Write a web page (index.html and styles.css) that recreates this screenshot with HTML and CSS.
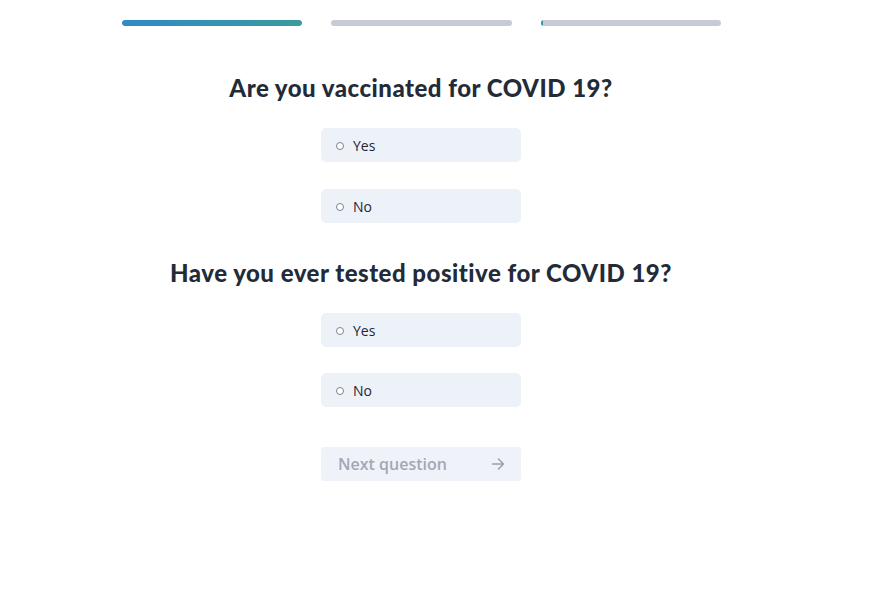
FILE: index.html
```html
<!DOCTYPE html>
<html lang="en">
<head>
<meta charset="utf-8">
<title>COVID 19 questionnaire</title>
<link rel="stylesheet" href="styles.css">
</head>
<body>
<main class="page">
  <div class="progress">
    <div class="track"><div class="fill" style="width:100%"></div></div>
    <div class="track"><div class="fill" style="width:0%"></div></div>
    <div class="track"><div class="fill" style="width:2px"></div></div>
  </div>

  <section class="question">
    <h2 class="title">Are you vaccinated for COVID 19?</h2>
    <div class="options">
      <label class="option"><span class="radio"></span><span class="label">Yes</span></label>
      <label class="option"><span class="radio"></span><span class="label">No</span></label>
    </div>
  </section>

  <section class="question">
    <h2 class="title">Have you ever tested positive for COVID 19?</h2>
    <div class="options">
      <label class="option"><span class="radio"></span><span class="label">Yes</span></label>
      <label class="option"><span class="radio"></span><span class="label">No</span></label>
    </div>
  </section>

  <button class="next" type="button">
    <span>Next question</span>
    <svg class="arrow" width="14" height="14" viewBox="0 0 14 14" fill="none" stroke="currentColor" stroke-width="1.6" stroke-linecap="round" stroke-linejoin="round"><path d="M1.5 7h11M7.5 2l5 5-5 5"/></svg>
  </button>
</main>
</body>
</html>
```
FILE: styles.css
```css
html, body {
  margin: 0;
  padding: 0;
  background: #ffffff;
}
body {
  font-family: "Open Sans", "Liberation Sans", sans-serif;
  color: #1f2733;
}
.page {
  width: 842px;
  display: flex;
  flex-direction: column;
  align-items: center;
  padding-top: 20px;
}
.progress {
  width: 599px;
  margin-left: 1px;
  display: flex;
  gap: 29px;
}
.track {
  flex: 1;
  height: 6px;
  border-radius: 3px;
  background: #c6ccd6;
  overflow: hidden;
}
.fill {
  height: 100%;
  border-radius: 3px;
  background: linear-gradient(90deg, #2f8bc6, #3a9a9e);
}
.question {
  display: flex;
  flex-direction: column;
  align-items: center;
}
.title {
  margin: 0;
  font-family: "Lato", "Liberation Sans", sans-serif;
  font-weight: 900;
  font-size: 24px;
  line-height: 30px;
  letter-spacing: 0.5px;
  color: #232b38;
  white-space: nowrap;
}
.question:first-of-type .title {
  margin-top: 47px;
}
.question + .question .title {
  margin-top: 35px;
}
.options {
  display: flex;
  flex-direction: column;
  gap: 27px;
  margin-top: 25px;
}
.question + .question .options {
  gap: 26px;
}
.option {
  width: 200px;
  height: 34px;
  box-sizing: border-box;
  padding-left: 15px;
  display: flex;
  align-items: center;
  border-radius: 5px;
  background: #edf1f8;
  cursor: pointer;
}
.radio {
  width: 6px;
  height: 6px;
  margin-top: 1px;
  border: 1px solid #7c8491;
  border-radius: 50%;
  background: #ffffff;
  flex: none;
}
.label {
  margin-left: 9px;
  font-size: 14px;
  color: #1f2733;
}
.next {
  margin-top: 40px;
  width: 200px;
  height: 34px;
  box-sizing: border-box;
  padding: 0 16px 0 17px;
  display: flex;
  align-items: center;
  justify-content: space-between;
  border: none;
  border-radius: 3px;
  background: #eff3f9;
  color: #a2a8b3;
  font-family: "Open Sans", "Liberation Sans", sans-serif;
  font-weight: 600;
  font-size: 16px;
}
.arrow {
  color: #9aa1ad;
}
```
